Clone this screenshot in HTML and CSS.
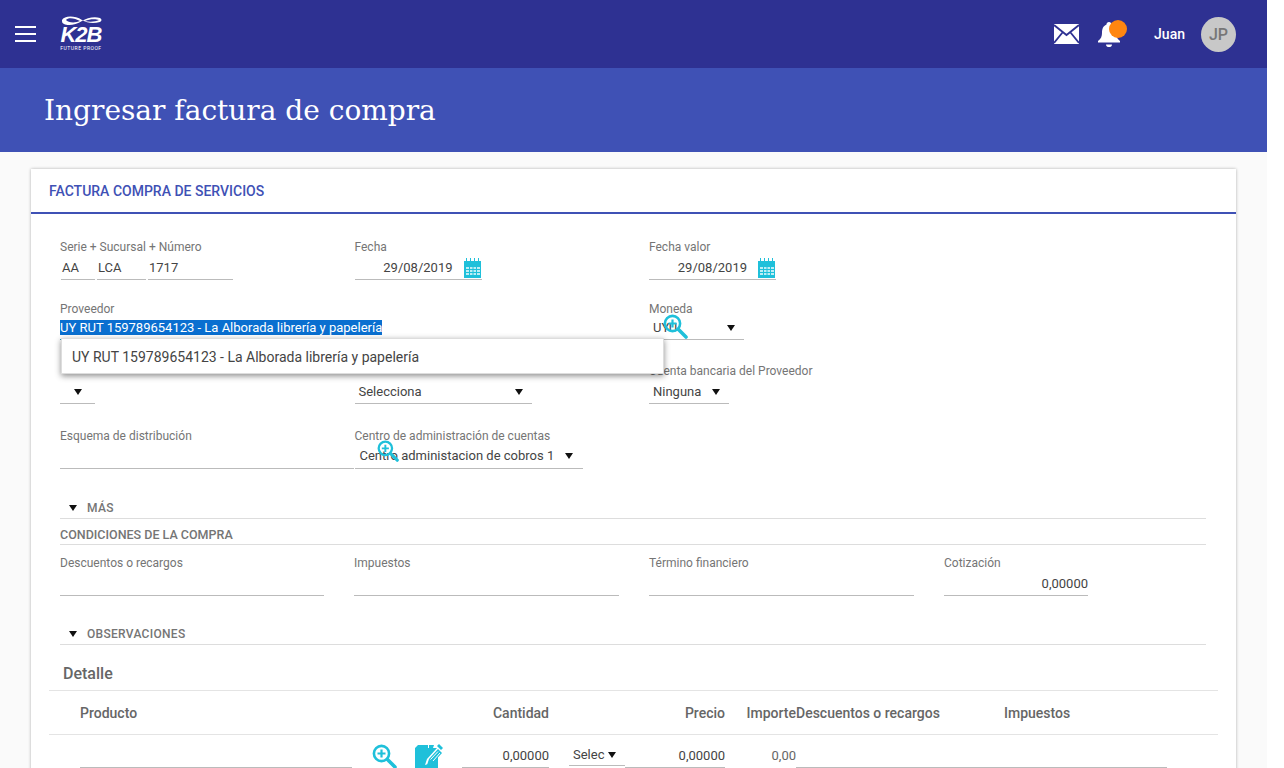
FILE: index.html
```html
<!DOCTYPE html>
<html lang="es">
<head>
    <meta charset="UTF-8">
    <title>Ingresar factura de compra</title>
    <link rel="stylesheet" href="styles.css">
</head>
<body>
<svg class="sprites" width="0" height="0">
    <symbol id="zoom-plus" viewBox="0 0 25 25">
        <circle cx="9.5" cy="9.5" r="7.6" fill="none" stroke="#1fc0da" stroke-width="2.6"/>
        <path d="M9.5 5.5v8M5.5 9.5h8" stroke="#1fc0da" stroke-width="2.2"/>
        <path d="M15.5 15.5l7.5 7.5" stroke="#1fc0da" stroke-width="3.6" stroke-linecap="round"/>
    </symbol>
    <symbol id="calendar" viewBox="0 0 18 20">
        <path d="M0 3h2V0h1v3h3V0h1v3h3V0h1v3h3V0h1v3h2v17H0z" fill="#1fc0da"/>
        <path d="M2 9h14v8H2z" fill="#bdeef5"/>
        <path d="M2 11.500h14M2 14.500h14M5.500 9v8M9 9v8M12.500 9v8" stroke="#1fc0da" stroke-width="1"/>
    </symbol>
</svg>

<div class="page">
    <header class="topbar">
        <div class="hamburger"><span></span><span></span><span></span></div>
        <div class="logo">
            <svg class="logo-swoosh" width="42" height="12" viewBox="0 0 42 12">
                <path d="M1 5C3 1 13 0 21 5c5 3 11 4 18 2 2-1 2-3 0-4-6-2-13 0-18 3-6 4-14 5-18 3C1 8 1 7 1 5zm4 0c2 3 10 3 14 1C14 3 7 2 5 5zm19 1c4 1 10 1 14-1-3-1-10-1-14 1z" fill="#fff" fill-rule="evenodd"/>
            </svg>
            <div class="logo-name">K2B</div>
            <div class="logo-tag">FUTURE PROOF</div>
        </div>
        <div class="topbar-right">
            <svg class="icon-mail" width="25" height="20" viewBox="0 0 25 20">
                <path d="M0 0h25v20H0z" fill="#fff"/>
                <path d="M0 1l12.500 10L25 1M0 19l8.500-10.500M25 19l-8.500-10.500" fill="none" stroke="#2e3192" stroke-width="1.800"/>
            </svg>
            <div class="bell">
                <svg width="24" height="27" viewBox="0 0 24 27">
                    <path d="M12 1c1.500 0 2.500 1 2.500 2.500C18 5 19 8 19 12c0 3 1 6 4 8v1.500H1V20c3-2 4-5 4-8 0-4 1-7 4.500-8.500C9.500 2 10.500 1 12 1z" fill="#fff"/>
                    <path d="M9 23.500h6c0 2-1.500 2.500-3 2.500s-3-.5-3-2.500z" fill="#fff"/>
                </svg>
                <span class="bell-dot"></span>
            </div>
            <span class="user-name">Juan</span>
            <span class="avatar">JP</span>
        </div>
    </header>

    <div class="title-band">
        <h1>Ingresar factura de compra</h1>
    </div>

    <main class="card">
        <div class="card-head">FACTURA COMPRA DE SERVICIOS</div>
        <div class="card-body">

            <div class="form-row row-first">
                <div class="col">
                    <label>Serie + Sucursal + Número</label>
                    <div class="inline-fields">
                        <div class="field w-serie">AA</div>
                        <div class="field w-suc">LCA</div>
                        <div class="field w-num">1717</div>
                    </div>
                </div>
                <div class="col">
                    <label>Fecha</label>
                    <div class="field field-date"><span>29/08/2019</span><svg width="18" height="20"><use href="#calendar"/></svg></div>
                </div>
                <div class="col">
                    <label>Fecha valor</label>
                    <div class="field field-date"><span>29/08/2019</span><svg width="18" height="20"><use href="#calendar"/></svg></div>
                </div>
            </div>

            <div class="form-row row-second">
                <div class="col-wide">
                    <label>Proveedor</label>
                    <div class="field field-active"><span class="selected">UY RUT 159789654123 - La Alborada librería y papelería</span></div>
                    <div class="suggest">UY RUT 159789654123 - La Alborada librería y papelería</div>
                </div>
                <div class="col">
                    <label>Moneda</label>
                    <div class="field select w-moneda">
                        <span>UYU</span><i class="caret"></i>
                        <svg class="float-zoom" width="25" height="25"><use href="#zoom-plus"/></svg>
                    </div>
                </div>
            </div>

            <div class="form-row row-third">
                <div class="col">
                    <label>&nbsp;</label>
                    <div class="field select w-blank"><span></span><i class="caret"></i></div>
                </div>
                <div class="col">
                    <label>&nbsp;</label>
                    <div class="field select w-selecciona"><span>Selecciona</span><i class="caret"></i></div>
                </div>
                <div class="col">
                    <label>Cuenta bancaria del Proveedor</label>
                    <div class="field select w-ninguna"><span>Ninguna</span><i class="caret"></i></div>
                </div>
            </div>

            <div class="form-row row-fourth">
                <div class="col">
                    <label>Esquema de distribución</label>
                    <div class="field w-esquema"></div>
                </div>
                <div class="col">
                    <label>Centro de administración de cuentas</label>
                    <div class="field select w-centro">
                        <span>Centro administacion de cobros 1</span><i class="caret"></i>
                        <svg class="float-zoom small" width="22" height="22"><use href="#zoom-plus"/></svg>
                    </div>
                </div>
            </div>

            <div class="section-toggle toggle-mas"><i class="caret"></i>MÁS</div>
            <div class="section-title">CONDICIONES DE LA COMPRA</div>

            <div class="conditions">
                <div><label>Descuentos o recargos</label><div class="field"></div></div>
                <div><label>Impuestos</label><div class="field"></div></div>
                <div><label>Término financiero</label><div class="field"></div></div>
                <div class="w-cotiz"><label>Cotización</label><div class="field num">0,00000</div></div>
            </div>

            <div class="section-toggle toggle-obs"><i class="caret"></i>OBSERVACIONES</div>
        </div>

        <div class="detail">
            <h2>Detalle</h2>
            <div class="grid grid-head">
                <div class="th">Producto</div>
                <div></div>
                <div class="th right">Cantidad</div>
                <div></div>
                <div class="th right">Precio</div>
                <div class="th right">Importe</div>
                <div class="th">Descuentos o recargos</div>
                <div class="th">Impuestos</div>
            </div>
            <div class="grid grid-row">
                <div class="field"></div>
                <div class="row-icons">
                    <svg width="25" height="25"><use href="#zoom-plus"/></svg>
                    <svg width="28" height="24" viewBox="0 0 28 24">
                        <path d="M0 4l3-3h10v3h9l-10 11-2 6 6-2 7-7v12H0z" fill="#1fc0da"/>
                        <path d="M14 1h5l-1 3h-4z" fill="#1fc0da"/>
                        <path d="M14 15l9-10 4 4-9 10-6 2z" fill="#1fc0da"/>
                        <path d="M15.500 15.500l7.500-8M18 17l7-8" stroke="#fff" stroke-width="1"/>
                        <path d="M22 2l2-2 4 4-2 2z" fill="#1fc0da"/>
                    </svg>
                </div>
                <div class="field num">0,00000</div>
                <div class="field select small-select"><span>Selec</span><i class="caret"></i></div>
                <div class="field num">0,00000</div>
                <div class="amount">0,00</div>
                <div class="field"></div>
                <div class="field"></div>
            </div>
        </div>
    </main>
</div>
</body>
</html>
```

FILE: styles.css
```css
html, body {
    margin: 0;
    height: 768px;
    overflow: hidden;
    background: #fff;
}
body {
    font-family: Roboto, Arial, sans-serif;
    font-size: 13px;
    color: #555;
}
.sprites {
    position: absolute;
}
.page {
    width: 1267px;
    height: 768px;
    overflow: hidden;
    background: #fafafa;
}

/* top bar */
.topbar {
    height: 68px;
    background: #2e3192;
    display: flex;
    align-items: center;
    padding: 0 31px 0 15px;
    box-sizing: border-box;
}
.hamburger {
    width: 21px;
    display: flex;
    flex-direction: column;
    gap: 5px;
}
.hamburger span {
    height: 2px;
    background: #fff;
}
.logo {
    margin-left: 20px;
    width: 50px;
    color: #fff;
    text-align: center;
    position: relative;
    top: -1px;
}
.logo-swoosh {
    display: block;
    margin: 0 0 -3px 5px;
}
.logo-name {
    font-family: "Liberation Sans", Arial, sans-serif;
    font-weight: bold;
    font-style: italic;
    font-size: 22px;
    line-height: 21px;
    letter-spacing: -1px;
}
.logo-tag {
    font-size: 5px;
    line-height: 7px;
    letter-spacing: .5px;
    white-space: nowrap;
}
.topbar-right {
    margin-left: auto;
    display: flex;
    align-items: center;
}
.bell {
    position: relative;
    margin-left: 18px;
    height: 27px;
}
.bell-dot {
    position: absolute;
    left: 12px;
    top: -1px;
    width: 18px;
    height: 18px;
    border-radius: 50%;
    background: #ff8610;
}
.user-name {
    margin-left: 33px;
    color: #fff;
    font-size: 14px;
    font-weight: 500;
}
.avatar {
    margin-left: 16px;
    width: 35px;
    height: 35px;
    border-radius: 50%;
    background: #c8c8c8;
    color: #777;
    font-size: 16px;
    font-weight: 500;
    display: flex;
    align-items: center;
    justify-content: center;
}

/* title */
.title-band {
    height: 84px;
    background: #3f51b5;
    display: flex;
    align-items: center;
    padding-left: 44px;
}
.title-band h1 {
    margin: 0;
    color: #fff;
    font-family: "DejaVu Serif", serif;
    font-weight: normal;
    font-size: 28px;
}

/* card */
.card {
    margin: 17px 31px 0 31px;
    background: #fff;
    box-shadow: 0 0 3px rgba(0, 0, 0, .3);
    height: 700px;
}
.card-head {
    height: 43px;
    line-height: 44px;
    padding-left: 18px;
    border-bottom: 2px solid #3f51b5;
    color: #3f51b5;
    font-size: 14px;
    font-weight: 500;
}
.card-body {
    padding: 0 30px 0 29px;
}
label {
    display: block;
    font-size: 12px;
    line-height: 14px;
    color: #757575;
}

.field {
    height: 23px;
    line-height: 24px;
    border-bottom: 1px solid #bbb;
    font-size: 13px;
    color: #444;
    position: relative;
    box-sizing: content-box;
}
.num {
    text-align: right;
}
.form-row {
    display: flex;
}
.form-row .col {
    width: 294.500px;
}
.col-wide {
    width: 589px;
    position: relative;
}
.row-first {
    padding-top: 26px;
}
.row-first label {
    margin-bottom: 2px;
}
.inline-fields {
    display: flex;
    margin-left: 1px;
    gap: 2px;
}
.w-serie { width: 33px; padding-left: 1px; }
.w-suc { width: 48px; padding-left: 1px; }
.w-num { width: 84px; padding-left: 1px; }
.field-date {
    width: 127px;
    display: flex;
    justify-content: flex-end;
    align-items: center;
    gap: 11px;
    line-height: normal;
}

.row-second {
    margin-top: 22px;
}
.field-active {
    border-bottom-color: #2aa7bb;
}
.selected {
    background: #0a6fd0;
    color: #fff;
    line-height: 15px;
    display: inline-block;
}
.suggest {
    position: absolute;
    left: 1px;
    top: 36px;
    width: 603px;
    height: 36px;
    line-height: 36px;
    padding-left: 10px;
    box-sizing: border-box;
    background: #fff;
    border: 1px solid #ddd;
    box-shadow: 0 2px 6px rgba(0, 0, 0, .45);
    font-size: 14px;
    color: #444;
    z-index: 5;
}
.select {
    display: flex;
    align-items: center;
    justify-content: space-between;
    line-height: normal;
}
.caret {
    display: block;
    width: 0;
    height: 0;
    border-left: 4.500px solid transparent;
    border-right: 4.500px solid transparent;
    border-top: 6px solid #111;
    flex: none;
}
.w-moneda {
    width: 95px;
    padding: 0 9px 0 4px;
    box-sizing: border-box;
    height: 24px;
}
.float-zoom {
    position: absolute;
    left: 14px;
    top: -2px;
}
.float-zoom.small {
    left: 22px;
    top: -3px;
}

.row-third {
    margin-top: 24px;
}
.row-third label {
    margin-bottom: 2px;
}
.row-third .col:first-child .field {
    width: 35px;
    justify-content: center;
}
.row-third .col:nth-child(3) label {
    margin-bottom: 2px;
}
.w-selecciona {
    width: 177px;
    padding: 0 9px 0 4px;
    box-sizing: border-box;
    height: 24px;
}
.w-ninguna {
    width: 80px;
    padding: 0 9px 0 4px;
    box-sizing: border-box;
    height: 24px;
}

.row-fourth {
    margin-top: 25px;
}
.w-esquema {
    width: 294px;
    height: 25px;
}
.row-fourth label {
    margin-bottom: 0;
}
.w-centro {
    width: 228px;
    padding: 0 10px 0 5px;
    box-sizing: border-box;
    height: 26px;
    margin-left: -67px;
    padding-left: 72px;
    width: 295px;
    margin-left: 0;
    padding-left: 5px;
    width: 228px;
}

.section-toggle {
    display: flex;
    align-items: center;
    font-size: 12px;
    font-weight: 500;
    color: #757575;
    letter-spacing: .3px;
    height: 20px;
    border-bottom: 1px solid #ddd;
    padding-left: 9px;
    gap: 10px;
}
.toggle-mas {
    margin-top: 29px;
}
.section-title {
    height: 25px;
    line-height: 32px;
    font-size: 12.500px;
    font-weight: 500;
    color: #757575;
    border-bottom: 1px solid #ddd;
}
.conditions {
    display: grid;
    grid-template-columns: 264px 265px 265px 144px;
    column-gap: 30px;
    padding-top: 11px;
}
.conditions .field {
    margin-top: 2px;
    height: 23px;
}
.w-cotiz .field {
    color: #444;
}
.toggle-obs {
    margin-top: 28px;
}

/* detalle */
.detail {
    padding: 0 18px;
}
.detail h2 {
    margin: 0;
    font-size: 16px;
    font-weight: 500;
    color: #666;
    height: 45px;
    line-height: 58px;
    padding-left: 14px;
    border-bottom: 1px solid #e4e4e4;
}
.grid {
    display: grid;
    grid-template-columns: 272px 110px 87px 76px 100px 71px 208px 163px;
    column-gap: 0;
}
.grid-head {
    height: 43px;
    align-items: center;
    border-bottom: 1px solid #e4e4e4;
    padding-left: 31px;
}
.th {
    font-size: 14px;
    font-weight: 500;
    color: #666;
}
.right {
    text-align: right;
}
.grid-row {
    padding-left: 31px;
    padding-top: 9px;
    align-items: start;
}
.row-icons {
    display: flex;
    gap: 18px;
    padding-left: 20px;
}
.amount {
    text-align: right;
    line-height: 24px;
    color: #666;
}
.small-select {
    width: 56px;
    height: 22px;
    margin-left: 20px;
    padding: 0 9px 0 4px;
    box-sizing: border-box;
    overflow: hidden;
}
```
